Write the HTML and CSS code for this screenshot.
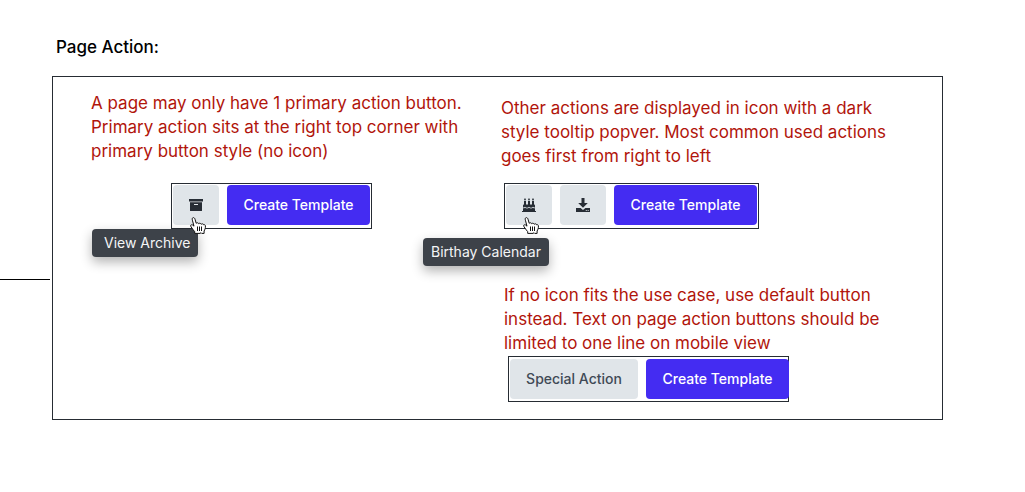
FILE: index.html
```
<!DOCTYPE html>
<html lang="en">
<head>
<meta charset="utf-8">
<title>Page Action</title>
<link rel="stylesheet" href="styles.css">
</head>
<body>
<svg class="defs" width="0" height="0" aria-hidden="true">
  <symbol id="hand" viewBox="0 0 16 17">
    <path d="M4.7 16.4V14.6C3.8 13.6 2.6 12.2 1.9 11C1.4 10.2.6 9.5.6 8.6C.8 7.7 2.1 7.5 2.9 8.2L4 9.2L2.4 3.2C2 1.8 2.3.8 3.2.6C4.1.5 4.7 1.2 5 2.2L6.2 6.3C7 5.4 8.4 5.7 8.7 6.7C9.5 5.9 10.8 6.2 11.2 7.3C12 6.5 13.3 6.7 13.7 7.8C14.5 7.4 15.3 7.9 15.4 8.8C15.6 11 14.9 12.6 14.1 14V16.4H11.7L11 15.6L10.2 16.4Z" fill="#fff" stroke="#111" stroke-linejoin="round"/>
    <path d="M7.5 9.5V14M9.5 9.5V14M11.5 9.5V14" fill="none" stroke="#111"/>
  </symbol>
</svg>
<main class="page">
  <h1 class="title">Page Action:</h1>
  <section class="board">
    <span class="connector"></span>
    <div class="column column-first">
      <p class="note">A page may only have 1 primary action button.<br>Primary action sits at the right top corner with<br>primary button style (no icon)</p>
      <div class="toolbar toolbar-archive">
        <button class="btn btn-icon" type="button" aria-label="View Archive">
          <svg width="14" height="14" viewBox="0 0 14 14" aria-hidden="true"><path d="M0 1H14V3.5H0ZM1 4.2H13V12.5Q13 13 12.5 13H1.5Q1 13 1 12.5ZM5 6V7H9V6Z" fill="#272d35" fill-rule="evenodd"/></svg>
        </button>
        <button class="btn btn-primary" type="button">Create Template</button>
        <span class="tooltip tooltip-archive" role="tooltip">View Archive</span>
        <svg class="cursor" width="16" height="17" aria-hidden="true"><use href="#hand"/></svg>
      </div>
    </div>
    <div class="column column-second">
      <p class="note">Other actions are displayed in icon with a dark<br>style tooltip popver. Most common used actions<br>goes first from right to left</p>
      <div class="toolbar toolbar-calendar">
        <button class="btn btn-icon" type="button" aria-label="Birthay Calendar">
          <svg width="14" height="14" viewBox="0 0 14 14" aria-hidden="true"><path d="M2 3H4V6.5H6V3H8V6.5H10V3H12V6.5H12.2Q13 6.5 13 7.4V9.4Q12 9.8 11 8.8Q9 10.6 7 8.8Q5 10.6 3 8.8Q2 9.8 1 9.4V7.4Q1 6.5 1.8 6.5H2ZM3 0Q4.8 2.3 3 2.5Q1.2 2.3 3 0ZM7 0Q8.8 2.3 7 2.5Q5.2 2.3 7 0ZM11 0Q12.8 2.3 11 2.5Q9.2 2.3 11 0ZM1 10.2Q2 10.4 3 9.7Q5 11.2 7 9.7Q9 11.2 11 9.7Q12 10.4 13 10.2V13H14V14H0V13H1Z" fill="#272d35"/></svg>
        </button>
        <button class="btn btn-icon" type="button" aria-label="Download">
          <svg width="14" height="14" viewBox="0 0 14 14" aria-hidden="true"><path d="M5.5 0H8.5V5H11.8L7 9.7L2.2 5H5.5ZM0 10H4.6L7 12L9.4 10H14V14H0ZM9.8 12V13H10.7V12ZM11.7 12V13H12.6V12Z" fill="#272d35" fill-rule="evenodd"/></svg>
        </button>
        <button class="btn btn-primary" type="button">Create Template</button>
        <span class="tooltip tooltip-calendar" role="tooltip">Birthay Calendar</span>
        <svg class="cursor" width="16" height="17" aria-hidden="true"><use href="#hand"/></svg>
      </div>
      <p class="note note-special">If no icon fits the use case, use default button<br>instead. Text on page action buttons should be<br>limited to one line on mobile view</p>
      <div class="toolbar toolbar-special">
        <button class="btn btn-default" type="button">Special Action</button>
        <button class="btn btn-primary" type="button">Create Template</button>
      </div>
    </div>
  </section>
</main>
</body>
</html>
```
FILE: styles.css
```
* { box-sizing: border-box; }
body {
  margin: 0;
  background: #fff;
  font-family: Inter, "Liberation Sans", sans-serif;
}
.defs { position: absolute; }
.page { padding: 35px 82px 40px 52px; }
.title {
  margin: 0 0 17px;
  padding-left: 4px;
  font-size: 17px;
  line-height: 24px;
  font-weight: 500;
  color: #000;
}
.board {
  position: relative;
  display: grid;
  grid-template-columns: 410px 1fr;
  padding: 14px 0 17px 38px;
  border: 1px solid #262c33;
}
.connector {
  position: absolute;
  top: 202px;
  left: -53px;
  width: 50px;
  height: 1px;
  background: #000;
}
.column {
  display: flex;
  flex-direction: column;
  align-items: flex-start;
}
.column-second { padding-top: 5px; }
.note {
  margin: 0;
  color: #b1150b;
  font-size: 17px;
  line-height: 24px;
  font-weight: 400;
  white-space: nowrap;
}
.toolbar {
  position: relative;
  display: flex;
  gap: 8px;
  padding: 1px 1px 3px;
  border: 1px solid #262c33;
}
.toolbar-archive { margin: 20px 0 0 80px; }
.toolbar-calendar { margin: 15px 0 0 3px; }
.note-special { margin: 54px 0 0 3px; }
.toolbar-special {
  margin: 1px 0 0 7px;
  padding: 2px 0 2px 1px;
}
.btn {
  display: flex;
  align-items: center;
  justify-content: center;
  height: 40px;
  padding: 0 16px;
  border: 0;
  border-radius: 4px;
  background: #e0e5e9;
  color: #404a56;
  font: 500 14px/20px Inter, "Liberation Sans", sans-serif;
  white-space: nowrap;
}
.btn-icon { width: 46px; }
.btn-default { min-width: 128px; }
.btn-primary {
  min-width: 143px;
  background: #442cf2;
  color: #fff;
}
.toolbar-special .btn-primary {
  position: relative;
  margin-right: -1px;
}
.tooltip {
  position: absolute;
  padding: 4px 8px;
  border-radius: 4px;
  background: #3d4249;
  color: #f4f5f6;
  font-size: 14px;
  line-height: 20px;
  white-space: nowrap;
  box-shadow: 0 5px 12px rgba(0, 0, 0, 0.3);
}
.tooltip-archive {
  top: 45px;
  left: -80px;
  padding-left: 12px;
}
.tooltip-calendar {
  top: 54px;
  left: -82px;
}
.cursor {
  position: absolute;
  top: 33px;
  left: 18px;
}
```
